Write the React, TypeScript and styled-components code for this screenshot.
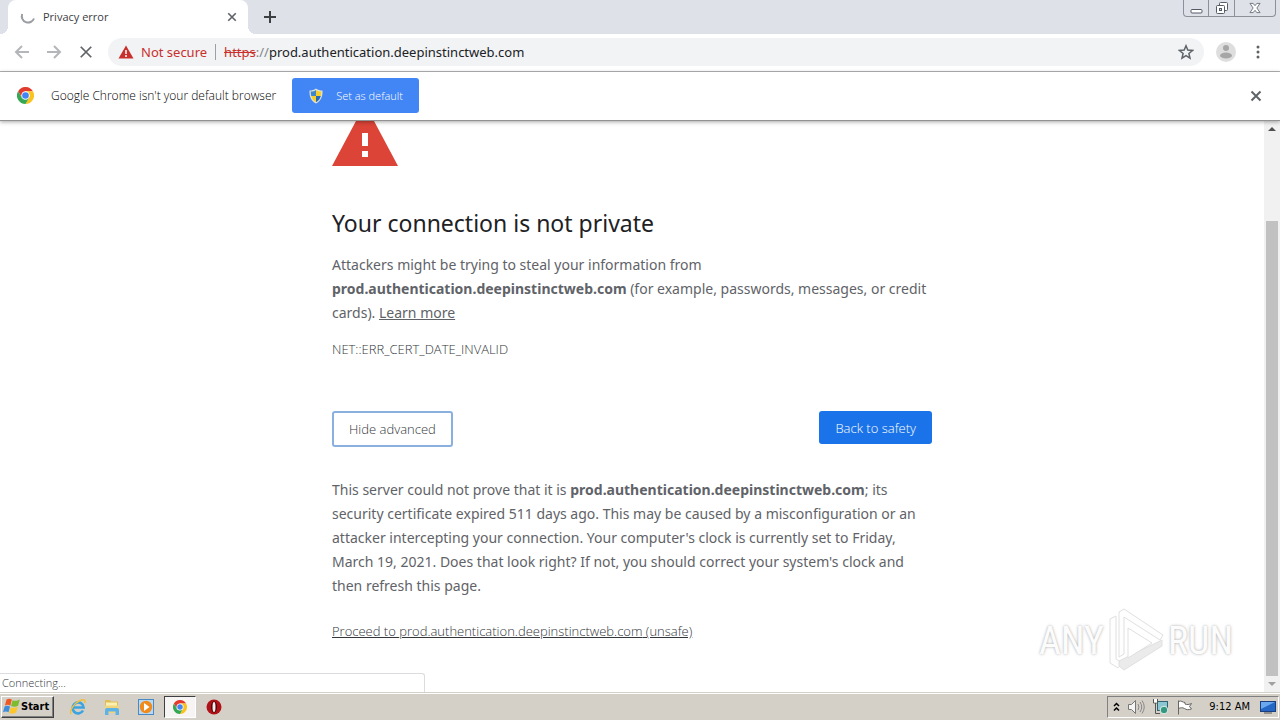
import React from 'react';
import styled, { createGlobalStyle } from 'styled-components';

const HOST = 'prod.authentication.deepinstinctweb.com';

const GlobalStyle = createGlobalStyle`
  * { box-sizing: border-box; }
  body { margin: 0; background: #fff; font-family: 'Noto Sans', 'Open Sans', sans-serif; }
  button { font-family: inherit; cursor: pointer; }
  p, h1 { margin: 0; }
`;

const Desktop = styled.div`
  display: flex;
  flex-direction: column;
  height: 100vh;
  overflow: hidden;
`;

const IconButton = styled.button<{ $size?: number }>`
  display: flex;
  align-items: center;
  justify-content: center;
  flex: none;
  width: ${({ $size = 32 }) => $size}px;
  height: ${({ $size = 32 }) => $size}px;
  padding: 0;
  border: 0;
  background: transparent;
`;

/* Tab strip */

const TabStrip = styled.header`
  display: flex;
  align-items: flex-start;
  flex: none;
  height: 34px;
  padding-left: 8px;
  background: #dee1e8;
`;

const Tab = styled.div`
  position: relative;
  display: flex;
  align-items: center;
  gap: 7px;
  width: 240px;
  height: 34px;
  padding: 0 8px 1px 12px;
  border-radius: 8px 8px 0 0;
  background: #fff;
  &::before, &::after {
    content: '';
    position: absolute;
    bottom: 0;
    width: 8px;
    height: 8px;
  }
  &::before { left: -8px; background: radial-gradient(circle at 0 0, #dee1e8 8px, #fff 8px); }
  &::after { right: -8px; background: radial-gradient(circle at 100% 0, #dee1e8 8px, #fff 8px); }
`;

const TabTitle = styled.span`
  flex: 1;
  font-family: 'Open Sans', sans-serif;
  font-size: 11px;
  line-height: 16px;
  color: #3c4043;
`;

const NewTab = styled(IconButton)`
  height: 34px;
  margin-left: 6px;
`;

const WindowControls = styled.div`
  display: flex;
  height: 17px;
  margin-left: auto;
  margin-right: 4px;
  border: 1px solid #8b9099;
  border-top: 0;
  border-radius: 0 0 4px 4px;
`;

const WindowButton = styled.button<{ $width: number }>`
  display: flex;
  align-items: center;
  justify-content: center;
  width: ${({ $width }) => $width}px;
  padding: 0;
  border: 0;
  background: transparent;
  & + & { border-left: 1px solid #8b9099; }
`;

/* Toolbar */

const Toolbar = styled.nav`
  display: flex;
  align-items: center;
  flex: none;
  height: 38px;
  padding: 0 6px 1px;
  border-bottom: 1px solid #b4b4b6;
  background: #fff;
`;

const Omnibox = styled.div`
  display: flex;
  align-items: center;
  flex: 1;
  height: 28px;
  margin: 0 6px;
  padding: 0 2px 0 10px;
  border-radius: 14px;
  background: #f1f3f5;
  font-size: 13px;
`;

const Security = styled.span`
  display: flex;
  align-items: center;
  gap: 7px;
  margin-right: 8px;
  padding-right: 8px;
  border-right: 1px solid #9aa0a6;
  line-height: 16px;
  color: #c9302c;
`;

const Url = styled.span`
  flex: 1;
  color: #202124;
  white-space: nowrap;
`;

const Scheme = styled.s`
  color: #c9302c;
`;

const Slashes = styled.span`
  color: #80868b;
`;

/* Default browser prompt */

const InfoBar = styled.section`
  position: relative;
  z-index: 1;
  display: flex;
  align-items: center;
  flex: none;
  height: 49px;
  padding: 0 8px 1px 17px;
  border-bottom: 1px solid #929292;
  box-shadow: 0 1px 4px rgba(0, 0, 0, 0.35);
  background: #fff;
`;

const InfoText = styled.span`
  margin: 0 16px 0 17px;
  font-family: 'Open Sans', sans-serif;
  font-size: 12px;
  font-weight: 300;
  color: #000;
`;

const DefaultButton = styled.button`
  display: flex;
  align-items: center;
  gap: 12px;
  height: 35px;
  padding: 0 16px;
  border: 0;
  border-radius: 3px;
  background: #4285f4;
  color: #fff;
  font-family: 'Open Sans', sans-serif;
  font-size: 11px;
  font-weight: 300;
`;

const InfoClose = styled(IconButton)`
  margin-left: auto;
`;

/* Page */

const Viewport = styled.div`
  position: relative;
  display: flex;
  flex: 1;
  min-height: 0;
`;

const Page = styled.main`
  flex: 1;
  overflow: hidden;
`;

const Interstitial = styled.div`
  width: 600px;
  margin: 0 auto;
  color: #5f6368;
  font-size: 14px;
  line-height: 24px;
  white-space: nowrap;
`;

const WarningIcon = styled.svg`
  display: block;
`;

const Title = styled.h1`
  margin: 41px 0 14px;
  font-size: 23px;
  font-weight: 400;
  line-height: 32px;
  color: #202124;
`;

const ErrorCode = styled.p`
  margin-top: 12px;
  font-family: 'Open Sans', sans-serif;
  font-size: 13px;
  font-weight: 300;
  color: #33373b;
`;

const PageLink = styled.a`
  color: inherit;
  text-decoration: underline;
`;

const Actions = styled.div`
  display: flex;
  justify-content: space-between;
  align-items: flex-start;
  margin: 50px 0 31px;
`;

const AdvancedButton = styled.button`
  height: 36px;
  padding: 0 15px;
  border: 2px solid #8ab0e0;
  border-radius: 3px;
  background: #fff;
  color: #33373b;
  font-family: 'Open Sans', sans-serif;
  font-size: 13px;
  font-weight: 300;
`;

const SafetyButton = styled.button`
  height: 33px;
  padding: 0 16px;
  border: 0;
  border-radius: 3px;
  background: #1a73e8;
  color: #fff;
  font-family: 'Open Sans', sans-serif;
  font-size: 13px;
  font-weight: 300;
`;

const Proceed = styled.p`
  margin-top: 21px;
  font-family: 'Open Sans', sans-serif;
  font-size: 13px;
  font-weight: 300;
  color: #33373b;
`;

const Scrollbar = styled.div`
  display: flex;
  flex-direction: column;
  align-items: center;
  width: 16px;
  background: #f1f1f1;
`;

const ScrollButton = styled(IconButton)`
  width: 16px;
  height: 16px;
`;

const ScrollTrack = styled.div`
  display: flex;
  flex-direction: column;
  justify-content: flex-end;
  flex: 1;
  width: 12px;
`;

const ScrollThumb = styled.div`
  height: 84.5%;
  background: #c1c1c1;
`;

const StatusBubble = styled.div`
  position: absolute;
  left: 0;
  bottom: 0;
  width: 425px;
  height: 19px;
  padding-left: 2px;
  border: 1px solid #dadce0;
  border-left: 0;
  border-bottom: 0;
  border-radius: 0 3px 0 0;
  background: #fff;
  color: #33373b;
  font-family: 'Open Sans', sans-serif;
  font-size: 11px;
  font-weight: 300;
  line-height: 18px;
`;

const Watermark = styled.div`
  position: absolute;
  right: 47px;
  bottom: 18px;
  display: flex;
  align-items: center;
  gap: 3px;
  height: 66px;
  color: #fcfcfc;
  font-family: 'Roboto Condensed', Roboto, sans-serif;
  font-size: 38px;
  line-height: 66px;
  text-shadow: 0 0 3px rgba(0, 0, 0, 0.35);
`;

/* Taskbar */

const Taskbar = styled.footer`
  display: flex;
  align-items: center;
  flex: none;
  height: 28px;
  padding: 0 1px;
  border-top: 1px solid #d4d0c8;
  box-shadow: inset 0 1px 0 #fff;
  background: #d4d0c8;
  font-family: 'DejaVu Sans Condensed', sans-serif;
  font-size: 11px;
  color: #000;
`;

const StartButton = styled.button`
  display: flex;
  align-items: center;
  gap: 1px;
  height: 22px;
  margin-right: 8px;
  padding: 0 4px 0 1px;
  border: 1px solid;
  border-color: #fff #404040 #404040 #fff;
  box-shadow: inset -1px -1px 0 #808080;
  background: #d4d0c8;
  font-weight: 700;
  font-size: 11px;
`;

const TaskButton = styled.button<{ $active?: boolean }>`
  display: flex;
  align-items: center;
  justify-content: center;
  width: 32px;
  height: 22px;
  margin-right: 2px;
  padding: 0;
  border: 1px solid;
  border-color: ${({ $active }) => ($active ? '#404040 #fff #fff #404040' : 'transparent')};
  background: ${({ $active }) => ($active ? '#f6f5f4' : 'transparent')};
`;

const Tray = styled.div`
  display: flex;
  align-items: center;
  gap: 7px;
  height: 22px;
  margin-left: auto;
  padding: 0 2px 0 5px;
  border: 1px solid;
  border-color: #808080 #fff #fff #808080;
`;

const Clock = styled.time`
  margin: 0 3px 0 9px;
`;

/* Icons */

const Cross = ({ size, width = 2, color = '#5f6368' }: { size: number; width?: number; color?: string }) => (
  <svg width={size} height={size} viewBox="0 0 12 12" aria-hidden="true">
    <path d="M1.5 1.5l9 9M10.5 1.5l-9 9" stroke={color} strokeWidth={width} fill="none" />
  </svg>
);

const Arrow = ({ flip }: { flip?: boolean }) => (
  <svg width="16" height="16" viewBox="0 0 16 16" aria-hidden="true">
    <path
      d={flip ? 'M1 8h13M8 2l6 6-6 6' : 'M15 8H2M8 2L2 8l6 6'}
      stroke="#b4b6b9"
      strokeWidth="2"
      fill="none"
    />
  </svg>
);

const ChromeLogo = ({ size }: { size: number }) => (
  <svg width={size} height={size} viewBox="0 0 48 48" aria-hidden="true">
    <path d="M24 12h20.8a24 24 0 0 0-41.6 0l10.4 18z" fill="#e23b2e" />
    <path d="M34.4 30L24 48a24 24 0 0 0 20.8-36H24z" fill="#fcc31e" />
    <path d="M13.6 30L3.2 12A24 24 0 0 0 24 48l10.4-18z" fill="#34a853" />
    <circle cx="24" cy="24" r="12" fill="#fff" />
    <circle cx="24" cy="24" r="9.4" fill="#4285f4" />
  </svg>
);

const Shield = () => (
  <svg width="16" height="16" viewBox="0 0 16 16" aria-hidden="true">
    <path d="M8 .5C6 2 4 2.500 1.500 2.500c-.3 6 1.500 10.500 6.500 13 5-2.500 6.800-7 6.500-13C12 2.500 10 2 8 .5z" fill="#dfe3d8" />
    <path d="M8 2C6.500 3 5 3.500 2.700 3.600c0 1.600.1 3 .5 4.400H8z" fill="#3f86cc" />
    <path d="M8 2c1.500 1 3 1.500 5.300 1.600 0 1.600-.1 3-.5 4.400H8z" fill="#f6cf2d" />
    <path d="M3.200 8c.8 2.800 2.300 4.800 4.800 6.300V8z" fill="#f6cf2d" />
    <path d="M12.800 8c-.8 2.800-2.300 4.800-4.800 6.300V8z" fill="#2a69b5" />
  </svg>
);

const WindowsFlag = () => (
  <svg width="17" height="17" viewBox="0 0 16 16" aria-hidden="true">
    <path d="M3.300 1.500c1.700-1 3.400-1 5 0L6.900 7.200c-1.600-1-3.300-1-5.100-.1z" fill="#ee5a24" />
    <path d="M9 2c1.900.9 3.900.9 6.800-.6l-1.600 5.800c-2.300 1.300-4.500 1.200-6.600.3z" fill="#7dbb2f" />
    <path d="M1.500 8c1.800-.9 3.500-.9 5.100.1l-1.400 5.400c-1.600-1-3.400-1-5.200-.1z" fill="#3e8ddd" />
    <path d="M7.300 8.600c2.200 1 4.400.9 6.600-.4l-1.500 5.500c-2.300 1.300-4.500 1.300-6.600.3z" fill="#fcc62c" />
  </svg>
);

const WatermarkPlay = () => (
  <svg width="58" height="66" viewBox="0 0 58 66" aria-hidden="true">
    <g fill="#fefefe" stroke="#e0e0e0" strokeWidth="1" strokeLinejoin="round">
      <path d="M3 11l6-3v43l6 4-4 5-8-5z" />
      <path d="M12 4l5-3 39 26-3 5-36-23v37l-5 3z" />
      <path d="M55 32v6L17 62l-5-4v-5z" fill="#ebebeb" />
      <path d="M21 20l24 15-24 15z" fill="#fff" />
    </g>
  </svg>
);

const App = () => (
  <>
    <GlobalStyle />
    <Desktop>
      <TabStrip>
        <Tab>
          <svg width="16" height="16" viewBox="0 0 16 16" aria-hidden="true">
            <path d="M2.200 5A6.200 6.200 0 1 0 14 9.500" stroke="#9a9da1" strokeWidth="2" fill="none" />
          </svg>
          <TabTitle>Privacy error</TabTitle>
          <IconButton $size={16} aria-label="Close tab"><Cross size={10} /></IconButton>
        </Tab>
        <NewTab aria-label="New tab">
          <svg width="12" height="12" viewBox="0 0 12 12" aria-hidden="true">
            <path d="M6 0v12M0 6h12" stroke="#3c4043" strokeWidth="2" />
          </svg>
        </NewTab>
        <WindowControls>
          <WindowButton $width={24} aria-label="Minimize">
            <svg width="13" height="14" viewBox="0 0 13 14" aria-hidden="true">
              <rect x="1" y="8.500" width="11" height="3.500" rx="1" fill="#fff" stroke="#555b66" />
            </svg>
          </WindowButton>
          <WindowButton $width={26} aria-label="Restore">
            <svg width="14" height="14" viewBox="0 0 14 14" aria-hidden="true">
              <rect x="4.500" y="1.500" width="8" height="8" rx="1" fill="#fff" stroke="#555b66" />
              <rect x="1.500" y="4.500" width="8" height="8" rx="1" fill="#fff" stroke="#555b66" />
              <rect x="4.500" y="7.500" width="2" height="2" fill="#dee1e6" stroke="#555b66" />
            </svg>
          </WindowButton>
          <WindowButton $width={41} aria-label="Close">
            <svg width="12" height="12" viewBox="0 0 13 12" aria-hidden="true">
              <path
                d="M1 1h3.500l2 2.500L8.500 1H12L8.500 6l3.500 5H8.500l-2-2.500-2 2.500H1l3.500-5z"
                fill="#fff"
                stroke="#6a707b"
              />
            </svg>
          </WindowButton>
        </WindowControls>
      </TabStrip>

      <Toolbar>
        <IconButton aria-label="Back"><Arrow /></IconButton>
        <IconButton aria-label="Forward"><Arrow flip /></IconButton>
        <IconButton aria-label="Stop loading"><Cross size={14} width={1.5} /></IconButton>
        <Omnibox>
          <Security>
            <svg width="16" height="16" viewBox="0 0 16 16" aria-hidden="true">
              <path d="M8 1.500L15.500 14.500H.5z" fill="#c9302c" />
              <path d="M8 6v4M8 11v2" stroke="#fff" strokeWidth="1.500" />
            </svg>
            Not secure
          </Security>
          <Url><Scheme>https</Scheme><Slashes>://</Slashes>{HOST}</Url>
          <IconButton aria-label="Bookmark this page">
            <svg width="16" height="16" viewBox="0 0 16 16" aria-hidden="true">
              <path
                d="M8 1.800l1.800 4.300 4.700.4-3.600 3 1.100 4.600L8 11.700l-4 2.400 1.100-4.600-3.600-3 4.700-.4z"
                fill="none"
                stroke="#5f6368"
                strokeWidth="1.500"
              />
            </svg>
          </IconButton>
        </Omnibox>
        <IconButton aria-label="Profile">
          <svg width="20" height="20" viewBox="0 0 20 20" aria-hidden="true">
            <circle cx="10" cy="10" r="10" fill="#dedede" />
            <circle cx="10" cy="6" r="3" fill="#a6a6a6" />
            <ellipse cx="10" cy="13.500" rx="6" ry="3" fill="#a6a6a6" />
          </svg>
        </IconButton>
        <IconButton aria-label="Menu">
          <svg width="4" height="14" viewBox="0 0 4 14" aria-hidden="true">
            <g fill="#5f6368"><circle cx="2" cy="2" r="1.500" /><circle cx="2" cy="7" r="1.500" /><circle cx="2" cy="12" r="1.500" /></g>
          </svg>
        </IconButton>
      </Toolbar>

      <InfoBar>
        <ChromeLogo size={17} />
        <InfoText>Google Chrome isn't your default browser</InfoText>
        <DefaultButton><Shield />Set as default</DefaultButton>
        <InfoClose aria-label="Dismiss"><Cross size={12} /></InfoClose>
      </InfoBar>

      <Viewport>
        <Page>
          <Interstitial>
            <WarningIcon width="66" height="45" viewBox="0 0 66 45" role="img" aria-label="Warning">
              <path d="M0 45L24 0h18l24 45z" fill="#db4437" />
              <path d="M30 12h6v13h-6zM30 30h6v6h-6z" fill="#fff" />
            </WarningIcon>
            <Title>Your connection is not private</Title>
            <p>
              Attackers might be trying to steal your information from<br />
              <strong>{HOST}</strong> (for example, passwords, messages, or credit<br />
              cards). <PageLink href="#learn">Learn more</PageLink>
            </p>
            <ErrorCode>NET::ERR_CERT_DATE_INVALID</ErrorCode>
            <Actions>
              <AdvancedButton>Hide advanced</AdvancedButton>
              <SafetyButton>Back to safety</SafetyButton>
            </Actions>
            <p>
              This server could not prove that it is <strong>{HOST}</strong>; its<br />
              security certificate expired 511 days ago. This may be caused by a misconfiguration or an<br />
              attacker intercepting your connection. Your computer's clock is currently set to Friday,<br />
              March 19, 2021. Does that look right? If not, you should correct your system's clock and<br />
              then refresh this page.
            </p>
            <Proceed><PageLink href="#proceed">Proceed to {HOST} (unsafe)</PageLink></Proceed>
          </Interstitial>
        </Page>
        <Scrollbar>
          <ScrollButton aria-label="Scroll up">
            <svg width="8" height="4" viewBox="0 0 8 4" aria-hidden="true"><path d="M0 4l4-4 4 4z" fill="#505050" /></svg>
          </ScrollButton>
          <ScrollTrack><ScrollThumb /></ScrollTrack>
          <ScrollButton aria-label="Scroll down">
            <svg width="8" height="4" viewBox="0 0 8 4" aria-hidden="true"><path d="M0 0l4 4 4-4z" fill="#a0a0a0" /></svg>
          </ScrollButton>
        </Scrollbar>
        <StatusBubble role="status">Connecting...</StatusBubble>
        <Watermark><span>ANY</span><WatermarkPlay /><span>RUN</span></Watermark>
      </Viewport>

      <Taskbar>
        <StartButton><WindowsFlag />Start</StartButton>
        <TaskButton aria-label="Internet Explorer">
          <svg width="18" height="18" viewBox="0 0 18 18" aria-hidden="true">
            <path d="M14 12.500A5.500 5.500 0 1 1 14.600 9.500H4" stroke="#3ba4e0" strokeWidth="2.600" fill="none" />
            <path d="M2 16C0 13 5 5 11 2.500c4-1.800 6-.5 4.500 2.500" stroke="#f0c03a" strokeWidth="1.500" fill="none" />
          </svg>
        </TaskButton>
        <TaskButton aria-label="Windows Explorer">
          <svg width="18" height="18" viewBox="0 0 18 18" aria-hidden="true">
            <path d="M2 2h5l1 1.500h7V14H2z" fill="#e2bd55" />
            <path d="M3 4.500h11v7H3z" fill="#fbf0b4" />
            <path d="M2 7.500h14V15H2z" fill="#f0d67a" />
            <path d="M2 17v-5q0-2 2-2h10q2 0 2 2v5h-3.500v-3.500h-7V17z" fill="#5fb2e6" />
          </svg>
        </TaskButton>
        <TaskButton aria-label="Windows Media Player">
          <svg width="18" height="18" viewBox="0 0 18 18" aria-hidden="true">
            <rect x="1.500" y="1.500" width="15" height="15" fill="#b9d9f2" stroke="#4a8ac4" />
            <circle cx="9" cy="9" r="6.200" fill="#f08a1c" />
            <path d="M7 5l5.500 4L7 13z" fill="#fff" />
          </svg>
        </TaskButton>
        <TaskButton $active aria-label="Google Chrome"><ChromeLogo size={14} /></TaskButton>
        <TaskButton aria-label="Opera">
          <svg width="16" height="16" viewBox="0 0 16 16" aria-hidden="true">
            <circle cx="8" cy="8" r="7.500" fill="#b01217" />
            <ellipse cx="8" cy="8" rx="3" ry="5.800" fill="#4c0708" />
            <ellipse cx="8" cy="8" rx="1.500" ry="5" fill="#f4eeee" />
          </svg>
        </TaskButton>
        <Tray>
          <svg width="7" height="10" viewBox="0 0 7 10" aria-hidden="true">
            <path d="M1 4l2.500-2.500L6 4M1 8.500L3.500 6 6 8.500" stroke="#000" strokeWidth="1.500" fill="none" />
          </svg>
          <svg width="18" height="16" viewBox="0 0 18 16" aria-hidden="true">
            <path d="M1.500 5.500h3l4-4v13l-4-4h-3z" fill="#f5f5f5" stroke="#777" />
            <path d="M11 5q2 3 0 6M13 3q3.500 5 0 10M15 1.500q4.500 6.500 0 13" stroke="#888" fill="none" />
          </svg>
          <svg width="17" height="17" viewBox="0 0 17 17" aria-hidden="true">
            <rect x="5.500" y="3.500" width="10" height="9" fill="#8cc6d3" stroke="#33616e" />
            <path d="M1.500 1v4h4V1M3.500 5v10.500H8" stroke="#555" fill="none" />
            <path d="M2 1h3v3.500H2z" fill="#fff" />
            <circle cx="12" cy="12" r="3.800" fill="#36967f" stroke="#e2efe9" />
          </svg>
          <svg width="17" height="16" viewBox="0 0 17 16" aria-hidden="true">
            <path d="M2.500 15.500v-14M2.500 2.500c3-1.500 4 1 6.500 1v1.500c2 1 4 .5 6.500-.5l-2 3 2 2.500c-3 1-5 1-7-.5-2-1-3.500-1-6 0z" fill="#fff" stroke="#666" />
          </svg>
          <Clock>9:12 AM</Clock>
          <svg width="16" height="14" viewBox="0 0 16 14" aria-hidden="true">
            <rect x=".5" y="1.500" width="15" height="10" fill="#2467c4" stroke="#1b3f7c" />
            <path d="M1 2h14L1 9z" fill="#69a8ee" />
            <path d="M4 13h8" stroke="#555" />
          </svg>
        </Tray>
      </Taskbar>
    </Desktop>
  </>
);

export default App;
